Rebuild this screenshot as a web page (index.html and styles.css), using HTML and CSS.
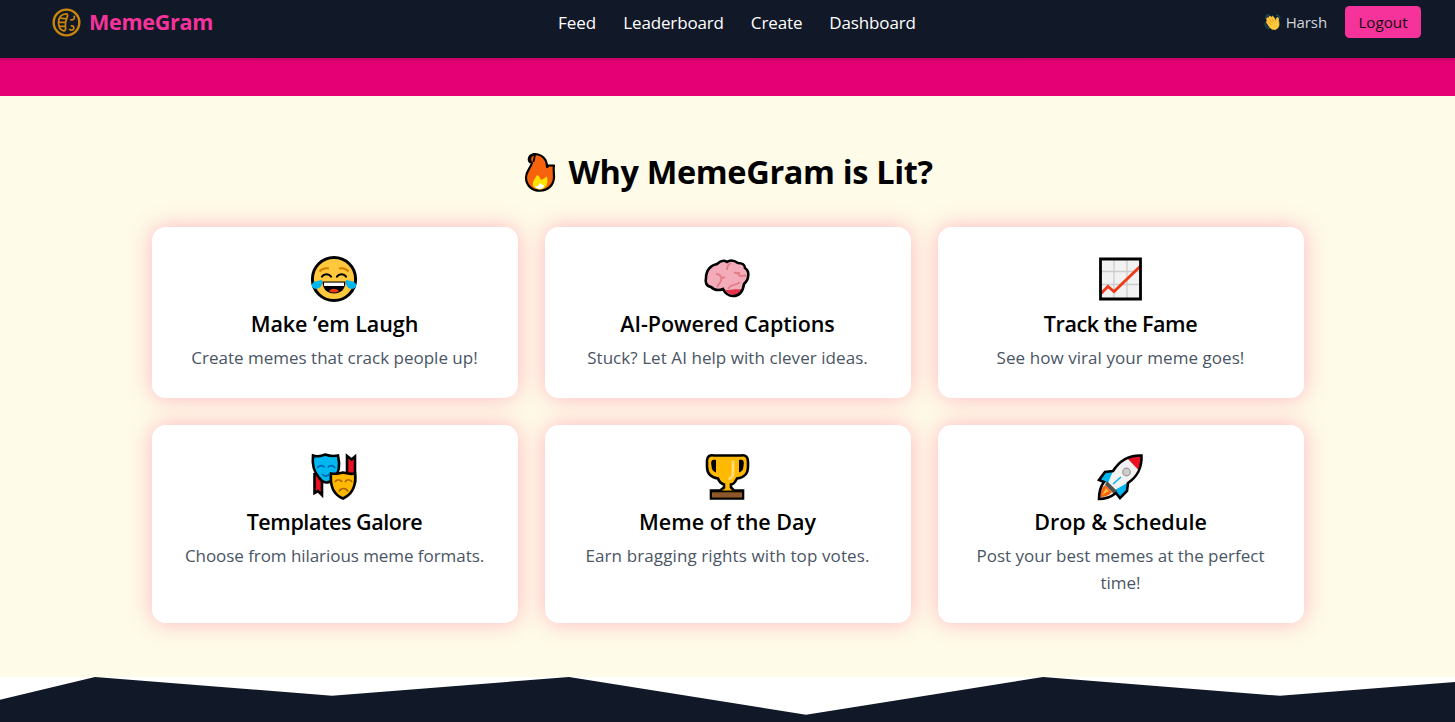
FILE: index.html
```
<!DOCTYPE html>
<html lang="en">
<head>
<meta charset="utf-8">
<title>MemeGram</title>
<link rel="stylesheet" href="styles.css">
</head>
<body>
<header class="navbar">
  <a class="brand">
    <svg class="brand-logo" viewBox="0 0 28 28" fill="none" stroke="#ca850c" stroke-width="1.7" stroke-linecap="round">
      <circle cx="14" cy="14" r="12.4" stroke-width="2.3"/>
      <path d="M14 5.600C9 5.800 6.400 9.200 6.300 14c0 3.800 1.700 7.300 5 8 2 .2 2-2 1.600-5C12.700 13 14.500 10 15 7.500c0-1.300-.2-1.900-1-1.900zM8.300 9.800l5.700.8M6.600 13.800h6.300M7.400 17.800l5.600-.4M18.300 11.500c2.300.3 3.700-1 3.200-3.500M17 20.800c2.600 1.200 4.600 0 4-2.300-.3-1-1.200-1.400-2.200-1.200"/>
    </svg>
    <span class="brand-name">MemeGram</span>
  </a>
  <nav class="nav-links"><a class="nav-feed">Feed</a><a class="nav-leader">Leaderboard</a><a class="nav-create">Create</a><a class="nav-dash">Dashboard</a></nav>
  <div class="account">
    <svg class="wave-hand" viewBox="0 0 18 18">
      <path d="M2 5c0-2 1-3 3-3M1.200 10.500c0 2.300 1.300 4.300 3.600 4.800M12.500 2.200c1.800.2 3 1.300 3.300 3" fill="none" stroke="#174451" stroke-width="1.800" stroke-linecap="round"/>
      <path d="M3 5.200c.8-.8 1.500-.4 2 .3l1 1.200-1.100-2c-.4-1.200 1-2 1.800-.9l2 3-1-2.400c-.3-1.200 1.200-1.600 1.800-.5l2.600 4.600.3-3c.2-1.300 1.900-1.200 2 .1l.6 5.500c.2 2.500-1.400 4.800-3.800 5.300-2.400.5-4.300-.6-5.700-2.400L2.600 9.600c-.8-1.200.4-2 1.200-1.200L2.900 7c-.4-.7-.4-1.300.1-1.800z" fill="#ffc83d" stroke="#ffc83d" stroke-width=".8"/>
      <path d="M4 8.500l3.200 3.400M5.500 6.300l3.300 4M8.200 6l2.300 3.300" fill="none" stroke="#d67d00" stroke-width=".6"/>
    </svg>
    <span class="user-name">Harsh</span>
    <button class="logout"><span>Logout</span></button>
  </div>
</header>
<div class="hero-strip"></div>
<main class="features">
  <h1 class="heading">
    <svg class="fire" viewBox="0 0 32 40">
      <path d="M8 11C3 10 4 3 10 2c8 0 13 5 13 13 .6-.3 1-.8 1.300-1.500H30c-.8 3 0 6 0 12C29.700 33 24 38.700 16 38.700S2 33.500 2 25.500C2 19 6 17 8 11z" fill="#f7630c" stroke="#000" stroke-width="2.200" stroke-linejoin="round"/>
      <path d="M7 10C5 6 7 3 11 2.300 10.500 5 10.500 7 9.300 10" fill="none" stroke="#000" stroke-width="1.800"/>
      <path d="M9 34c-1-5 2-7 4-11 2.500 1 3 3 4 5l3-1.500 3-2c1 5 .5 8-1.500 10.500C18 38.700 12 38 9 34z" fill="#ffe100"/>
      <path d="M11 34l3 .2 2-3.500 2 2 2 .3c.5 2-1.800 4.200-4.200 4.200-2 0-4-1.200-4.800-3.200z" fill="#fff"/>
    </svg>
    <span class="heading-text">Why MemeGram is Lit?</span>
  </h1>
  <div class="grid">
    <article class="card">
      <svg class="icon" viewBox="0 0 48 48">
        <circle cx="24" cy="24" r="21.600" fill="#ffc83d" stroke="#000" stroke-width="3"/>
        <path d="M9.500 16.500c2.500-3 5.500-4 9.500-3M29 13.500c4-1 7 0 9.500 3" fill="none" stroke="#d67d00" stroke-width="2"/>
        <path d="M12 21.500c2-3 7-3 9 0M27 21.500c2-3 7-3 9 0" fill="none" stroke="#000" stroke-width="2.200" stroke-linecap="round"/>
        <path d="M12.500 26.500h23c0 7-4 12-11.500 12s-11.500-5-11.500-12z" fill="#000"/>
        <path d="M14 27.600h20V31H14z" fill="#fff"/><path d="M19 36c3-3 7-3 10 0-3 2-7 2-10 0z" fill="#f03a17"/>
        <path d="M12 25C13 30 10 34 6 34 0 33 1 28 5 26.500zM36 25C35 30 38 34 42 34c6-1 5-6 1-7.500z" fill="#00b7f0"/>
      </svg>
      <h2 class="t-laugh">Make ’em Laugh</h2><p class="p-laugh">Create memes that crack people up!</p>
    </article>
    <article class="card">
      <svg class="icon" viewBox="0 0 48 48">
        <path d="M14 9c3-3 7-4 10-2 4-3 8-1 11 1 4 0 7 2 7 5 3 2 4 5 3 9 0 3-2 5-4 7-1 7-4 12-11 12-5 0-8-3-10-7-5 2-9 1-12-2-5-1-6-5-5-9 0-8 5-13 11-14z" fill="#f4abba"/>
        <path d="M22 34.500c5 1.500 10-1 17 0-3 6-12 8-17 0z" fill="#e8324c"/>
        <path d="M13 19c4.500 0 6 3 5 7l-4 6M18 23.500l4-1.500M24 15c0-4 2-6 4-7M31 18c3-1 4.500 0 6 3l6-.5M36 20v-3M25 34c3-6 9-3 12-7" fill="none" stroke="#e37d89" stroke-width="1.900"/>
        <path d="M14 9c3-3 7-4 10-2 4-3 8-1 11 1 4 0 7 2 7 5 3 2 4 5 3 9 0 3-2 5-4 7-1 7-4 12-11 12-5 0-8-3-10-7-5 2-9 1-12-2-5-1-6-5-5-9 0-8 5-13 11-14z" fill="none" stroke="#000" stroke-width="2.600"/>
      </svg>
      <h2 class="t-ai">AI-Powered Captions</h2><p class="p-ai">Stuck? Let AI help with clever ideas.</p>
    </article>
    <article class="card">
      <svg class="icon" viewBox="0 0 48 48">
        <path d="M4.500 4h40v40h-40z" fill="#f2f2f2"/>
        <path d="M4 16.500h41M4 29.500h41M18 4v40M31 4v40" stroke="#ccc" stroke-width="1.300"/>
        <path d="M5 38.500l7-7 6 5L44 11.500" fill="none" stroke="#f03a17" stroke-width="2.800"/>
        <path d="M4.500 4h40v40h-40z" fill="none" stroke="#000" stroke-width="2.800"/>
      </svg>
      <h2 class="t-track">Track the Fame</h2><p class="p-track">See how viral your meme goes!</p>
    </article>
    <article class="card">
      <svg class="icon" viewBox="0 0 48 48">
        <g stroke="#000" stroke-width="2.600" stroke-linejoin="miter">
          <path d="M4.500 20v20l3.500-2 4 4V27M37 3v23l8 2V3.500l-3.500 3z" fill="#e81224"/>
          <path d="M3 2.500c5 2 9 0 12-1 3 1 8 2 13 1 2 9 2 17-4 23-5 6-11 5-15-1C4 19 2 11 3 2.500z" fill="#00b7f0"/>
          <path d="M21 20.500c4 1 7 0 12-1 4 1 8 2 12 1 1 9-1 20-12 25-10-4-13-14-12-25z" fill="#ffb900"/>
        </g>
        <path d="M7.500 15c1.500-3 5.500-3 7-.5M18 14.500c1.500-2.500 5.500-2.500 7 .5M12 21c2 2.800 5.500 2.800 7.500 0" fill="none" stroke="#0063b1" stroke-width="1.700"/>
        <path d="M25 29c1.500-3 5.500-3 7 0M35 29c1.500-3 5.500-3 7 0M29 38.500c2-4 7-4 9 0" fill="none" stroke="#ad6500" stroke-width="1.700"/>
      </svg>
      <h2 class="t-templates">Templates Galore</h2><p class="p-templates">Choose from hilarious meme formats.</p>
    </article>
    <article class="card">
      <svg class="icon" viewBox="0 0 48 48">
        <path d="M11 2.500h27c5-1 7 2 7 6v5c0 8-4 11-11 12-2 4-4 6-6 6v3l3 3h9v8H8v-8h9l4-3v-3c-3-1-5-3-6-6C8 24.500 4 20.500 4 13.500v-6c0-4 3-6 7-5z" fill="#ffb900" stroke="#000" stroke-width="2.600"/>
        <path d="M13 7c-4-1-5.500 1-4.500 5.500 0 4 1.500 6 4.500 7zM36 7c4-1 5.500 1 4.500 5.500 0 4-1.500 6-4.500 7z" fill="#000"/>
        <path d="M30 7.500v13c0 3-1.500 5-4.500 5" fill="none" stroke="#ffdc7a" stroke-width="2.800"/>
        <path d="M9.300 39.500h29.400v4.700H9.300z" fill="#8e562e"/><path d="M9 38.500h30" stroke="#000" stroke-width="2"/>
      </svg>
      <h2 class="t-day">Meme of the Day</h2><p class="p-day">Earn bragging rights with top votes.</p>
    </article>
    <article class="card">
      <svg class="icon" viewBox="0 0 48 48">
        <path d="M45.500 2.500C34 2 24 7 17 18l-8 1-6 8 5 2c-4 5-5 10-5 17 7 0 12-2 17-6l4 5 7-7 1-8C42 23 46 15 45.500 2.500z" fill="#f2f2f2"/>
        <path d="M17 18l-8 1-6 8 5 2 4 1zM31 30l1 3-1 6-7 7-4-6-1-3z" fill="#00b7f0"/>
        <path d="M31 5c5-2 10-2 14.500-2 0 5-1 10-3 14z" fill="#e81224"/>
        <path d="M11 28l10 10-3 3-9-9z" fill="#505050"/><path d="M9 32l7 7c-3 4-8 5-12 5 0-4 1-9 5-12z" fill="#f7630c"/><path d="M10 35l3 3-7 4z" fill="#ffb83d"/>
        <path d="M17 31l8-7" stroke="#00b7f0" stroke-width="1.600"/><circle cx="30.500" cy="19" r="3.800" fill="#ccc" stroke="#999" stroke-width="1.200"/>
        <path d="M45.500 2.500C34 2 24 7 17 18l-8 1-6 8 5 2c-4 5-5 10-5 17 7 0 12-2 17-6l4 5 7-7 1-8C42 23 46 15 45.500 2.500z" fill="none" stroke="#000" stroke-width="2.600"/>
      </svg>
      <h2 class="t-drop">Drop &amp; Schedule</h2><p class="p-drop">Post your best memes at the perfect<br>time!</p>
    </article>
  </div>
</main>
<svg class="zigzag" viewBox="0 0 1455 45" preserveAspectRatio="none"><path d="M0 22.700L95 0L332 18.800L569 0L806 37.700L1043 0L1280 18.800L1455 5V45H0z" fill="#111827"/></svg>
</body>
</html>
```
FILE: styles.css
```
* { box-sizing: border-box; }
body { margin: 0; height: 722px; overflow: hidden; background: #fff; font-family: "Open Sans", "Noto Sans", sans-serif; font-size: 17px; }
h1, h2, p { margin: 0; white-space: nowrap; }
.navbar { height: 58px; padding: 6px 34px 0 52px; background: #111827; display: grid; grid-template-columns: 506px 1fr auto; align-items: start; }
.brand { display: flex; align-items: center; gap: 8px; }
.brand-logo { width: 29px; height: 29px; }
.brand-name { color: #f6339a; font-weight: 700; font-size: 21.500px; line-height: 32px; letter-spacing: -.25px; }
.nav-links { display: flex; gap: 27px; color: #fff; line-height: 32px; padding-top: 1px; }
.nav-leader { letter-spacing: -.15px; }
.nav-create, .nav-dash { letter-spacing: -.13px; }
.account { display: flex; align-items: center; }
.wave-hand { width: 18px; height: 18px; margin-right: 4px; }
.user-name { color: #d1d5dc; font-size: 15px; margin-right: 18px; letter-spacing: -.1px; }
.logout { width: 76px; height: 32px; border: 0; border-radius: 4.500px; padding: 0; background: #f6339a; color: #111; font: 15.200px "Open Sans", sans-serif; }
.hero-strip { height: 38px; background: linear-gradient(#cb0066 0, #df0070 4px, #e60076 8px); }
.features { height: 581px; padding: 53px 151.500px 0; background: #fefbe8; }
.heading { height: 45px; display: flex; align-items: center; justify-content: center; gap: 12px; font-size: 32.500px; line-height: 45px; letter-spacing: -.36px; padding-left: 2px; }
.fire { width: 32px; height: 40px; }
.grid { margin-top: 33px; display: grid; grid-template-columns: repeat(3, 366px); grid-template-rows: 171px 198px; gap: 27px; }
.card { background: #fff; border-radius: 13.500px; box-shadow: 0 0 22px rgba(255, 90, 145, .42); padding: 28px 0 0; display: flex; flex-direction: column; align-items: center; text-align: center; }
.icon { width: 48px; height: 48px; flex: none; margin-right: 1px; }
.card h2 { font-size: 21.500px; font-weight: 600; line-height: 31px; margin-top: 5px; }
.card p { color: #4a5565; font-size: 17px; line-height: 27px; margin-top: 5px; }
.card .t-laugh, .card .t-ai { letter-spacing: -.08px; }
.card .t-track, .card .t-templates { letter-spacing: -.44px; }
.card .p-ai, .card .p-track { letter-spacing: .06px; }
.card .p-templates { letter-spacing: -.06px; }
.card .p-day { letter-spacing: .11px; }
.zigzag { display: block; width: 100%; height: 45px; }
```
